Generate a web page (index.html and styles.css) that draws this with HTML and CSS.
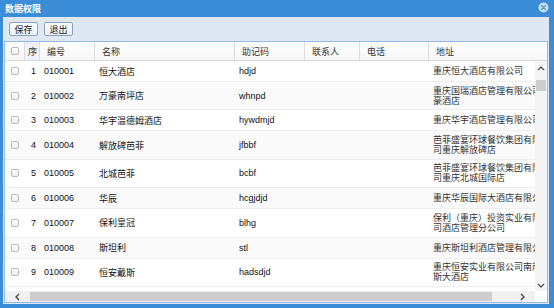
FILE: index.html
```html
<!DOCTYPE html>
<html lang="zh-CN">
<head>
    <meta charset="UTF-8">
    <title>数据权限</title>
    <link rel="stylesheet" href="styles.css">
</head>
<body>

    <div class="window">
        <div class="title">
            <span>数据权限</span>
            <svg class="close" width="11" height="11" viewBox="0 0 11 11">
                <circle cx="5.5" cy="5.5" r="5" fill="#cfe0f2"/>
                <path d="M3.5 3.5 L7.5 7.5 M7.5 3.5 L3.5 7.5" stroke="#5b9bd8" stroke-width="1.4" stroke-linecap="round"/>
            </svg>
        </div>

        <div class="panel">
            <div class="toolbar">
                <button class="btn">保存</button>
                <button class="btn">退出</button>
            </div>

            <div class="grid">
                <div class="grid-head">
                    <div class="row">
                        <div class="cell ck"><span class="box"></span></div>
                        <div class="cell num">序</div>
                        <div class="cell">编号</div>
                        <div class="cell">名称</div>
                        <div class="cell">助记码</div>
                        <div class="cell">联系人</div>
                        <div class="cell">电话</div>
                        <div class="cell">地址</div>
                    </div>
                </div>

                <div class="grid-mid">
                    <div class="grid-body">
                        <div class="row">
                            <div class="cell ck"><span class="box"></span></div>
                            <div class="cell num">1</div>
                            <div class="cell">010001</div>
                            <div class="cell">恒大酒店</div>
                            <div class="cell">hdjd</div>
                            <div class="cell"></div>
                            <div class="cell"></div>
                            <div class="cell addr">重庆恒大酒店有限公司</div>
                        </div>
                        <div class="row">
                            <div class="cell ck"><span class="box"></span></div>
                            <div class="cell num">2</div>
                            <div class="cell">010002</div>
                            <div class="cell">万豪南坪店</div>
                            <div class="cell">whnpd</div>
                            <div class="cell"></div>
                            <div class="cell"></div>
                            <div class="cell addr">重庆国瑞酒店管理有限公司万豪酒店</div>
                        </div>
                        <div class="row">
                            <div class="cell ck"><span class="box"></span></div>
                            <div class="cell num">3</div>
                            <div class="cell">010003</div>
                            <div class="cell">华宇温德姆酒店</div>
                            <div class="cell">hywdmjd</div>
                            <div class="cell"></div>
                            <div class="cell"></div>
                            <div class="cell addr">重庆华宇酒店管理有限公司</div>
                        </div>
                        <div class="row">
                            <div class="cell ck"><span class="box"></span></div>
                            <div class="cell num">4</div>
                            <div class="cell">010004</div>
                            <div class="cell">解放碑芭菲</div>
                            <div class="cell">jfbbf</div>
                            <div class="cell"></div>
                            <div class="cell"></div>
                            <div class="cell addr">芭菲盛宴环球餐饮集团有限公司重庆解放碑店</div>
                        </div>
                        <div class="row">
                            <div class="cell ck"><span class="box"></span></div>
                            <div class="cell num">5</div>
                            <div class="cell">010005</div>
                            <div class="cell">北城芭菲</div>
                            <div class="cell">bcbf</div>
                            <div class="cell"></div>
                            <div class="cell"></div>
                            <div class="cell addr">芭菲盛宴环球餐饮集团有限公司重庆北城国际店</div>
                        </div>
                        <div class="row">
                            <div class="cell ck"><span class="box"></span></div>
                            <div class="cell num">6</div>
                            <div class="cell">010006</div>
                            <div class="cell">华辰</div>
                            <div class="cell">hcgjdjd</div>
                            <div class="cell"></div>
                            <div class="cell"></div>
                            <div class="cell addr">重庆华辰国际大酒店有限公司</div>
                        </div>
                        <div class="row">
                            <div class="cell ck"><span class="box"></span></div>
                            <div class="cell num">7</div>
                            <div class="cell">010007</div>
                            <div class="cell">保利皇冠</div>
                            <div class="cell">blhg</div>
                            <div class="cell"></div>
                            <div class="cell"></div>
                            <div class="cell addr">保利（重庆）投资实业有限公司酒店管理分公司</div>
                        </div>
                        <div class="row">
                            <div class="cell ck"><span class="box"></span></div>
                            <div class="cell num">8</div>
                            <div class="cell">010008</div>
                            <div class="cell">斯坦利</div>
                            <div class="cell">stl</div>
                            <div class="cell"></div>
                            <div class="cell"></div>
                            <div class="cell addr">重庆斯坦利酒店管理有限公司</div>
                        </div>
                        <div class="row">
                            <div class="cell ck"><span class="box"></span></div>
                            <div class="cell num">9</div>
                            <div class="cell">010009</div>
                            <div class="cell">恒安戴斯</div>
                            <div class="cell">hadsdjd</div>
                            <div class="cell"></div>
                            <div class="cell"></div>
                            <div class="cell addr">重庆恒安实业有限公司南岸戴斯大酒店</div>
                        </div>
                    </div>

                    <div class="vbar">
                        <span class="vbtn up">
                            <svg width="8" height="5" viewBox="0 0 8 5"><path d="M1 4 L4 1 L7 4" fill="none" stroke="#555" stroke-width="1.3"/></svg>
                        </span>
                        <span class="vthumb"></span>
                        <span class="vtrack"></span>
                        <span class="vbtn down">
                            <svg width="8" height="5" viewBox="0 0 8 5"><path d="M1 1 L4 4 L7 1" fill="none" stroke="#555" stroke-width="1.3"/></svg>
                        </span>
                    </div>
                </div>

                <div class="grid-foot">
                    <div class="hbar">
                        <span class="hbtn left">
                            <svg width="5" height="8" viewBox="0 0 5 8"><path d="M4 1 L1 4 L4 7" fill="none" stroke="#444" stroke-width="1.3"/></svg>
                        </span>
                        <span class="hthumb"></span>
                        <span class="htrack"></span>
                        <span class="hbtn right">
                            <svg width="5" height="8" viewBox="0 0 5 8"><path d="M1 1 L4 4 L1 7" fill="none" stroke="#444" stroke-width="1.3"/></svg>
                        </span>
                    </div>
                    <div class="corner"></div>
                </div>
            </div>
        </div>
    </div>

</body>
</html>
```

FILE: styles.css
```css
* {
    box-sizing: border-box;
}

body {
    margin: 0;
    font-family: 'Liberation Sans', 'Noto Sans CJK SC', sans-serif;
    font-size: 9px;
    color: #222;
}

.window {
    width: 554px;
    height: 308px;
    background-color: #3a8dd6;
    padding: 0 5px 4px 3px;
    display: flex;
    flex-direction: column;
}

.title {
    height: 17px;
    flex-shrink: 0;
    display: flex;
    align-items: center;
    justify-content: space-between;
    padding-left: 2px;
    color: #fff;
    font-weight: bold;
    font-size: 9px;
}

.close {
    margin-top: -2px;
}

.panel {
    flex: 1;
    min-height: 0;
    background-color: #dfe8f2;
    padding: 0 1px 1px 1px;
    display: flex;
    flex-direction: column;
}

.toolbar {
    height: 24px;
    flex-shrink: 0;
    display: flex;
    align-items: center;
    gap: 6px;
    padding-left: 5px;
    padding-bottom: 1px;
}

.btn {
    width: 29px;
    height: 14px;
    padding: 0;
    font-family: inherit;
    font-size: 9px;
    color: #222;
    background: linear-gradient(#fbfcfd, #eaf0f6);
    border: 1px solid #8aa2bd;
    border-radius: 2px;
    cursor: pointer;
}

.grid {
    flex: 1;
    min-height: 0;
    background-color: #fff;
    border: 1px solid #95b8e7;
    display: flex;
    flex-direction: column;
}

.row {
    display: grid;
    grid-template-columns: 20px 15px 55px 140px 70px 55px 69px 130px;
    align-items: center;
}

.grid-head {
    height: 19px;
    flex-shrink: 0;
    overflow: hidden;
    background: linear-gradient(#fefefe, #f6f6f6);
    border-bottom: 1px solid #dcdcdc;
}

.grid-head .row {
    height: 18px;
    align-items: stretch;
}

.grid-head .cell {
    display: flex;
    align-items: center;
    padding-left: 7px;
    border-right: 1px solid #dcdcdc;
    color: #333;
}

.grid-head .cell.ck {
    padding-left: 0;
    justify-content: center;
}

.grid-head .cell.num {
    padding: 0 2px 0 0;
    justify-content: flex-end;
    background-color: #edf2f8;
}

.grid-mid {
    flex: 1;
    min-height: 0;
    display: flex;
}

.grid-body {
    flex: 1;
    min-width: 0;
    overflow: hidden;
}

.grid-body .row {
    min-height: 21px;
    border-bottom: 1px solid #efefef;
}

.grid-body .row:nth-child(even) {
    background-color: #fafafa;
}

.grid-body .cell {
    padding-left: 4px;
    white-space: nowrap;
    color: #111;
}

.grid-body .cell.addr {
    white-space: normal;
    width: 126px;
    padding: 3.7px 4px;
    line-height: 10px;
    color: #333;
}

.cell.ck {
    display: flex;
    justify-content: center;
    padding-left: 0;
}

.grid-body .cell.num {
    text-align: right;
    padding: 0 4px 0 0;
}

.box {
    width: 8px;
    height: 8px;
    border: 1px solid #b9b9b9;
    border-radius: 2px;
    background: linear-gradient(#fff, #f0f0f0);
}

/* fake scrollbars */
.vbar {
    width: 12px;
    flex-shrink: 0;
    background-color: #f4f4f4;
    display: flex;
    flex-direction: column;
    align-items: center;
}

.vbtn {
    display: flex;
    align-items: center;
    justify-content: center;
    width: 12px;
}

.vbtn.up {
    height: 19px;
    padding-bottom: 4px;
}

.vbtn.down {
    height: 16px;
    padding-top: 4px;
}

.vthumb {
    width: 10px;
    height: 11px;
    background-color: #cdcdcd;
}

.vtrack {
    flex: 1;
}

.grid-foot {
    height: 11px;
    flex-shrink: 0;
    display: flex;
}

.hbar {
    flex: 1;
    display: flex;
    align-items: center;
    background-color: #f1f1f1;
}

.hbtn {
    width: 25px;
    height: 11px;
    display: flex;
    align-items: center;
    justify-content: center;
}

.hthumb {
    width: 462px;
    height: 9px;
    background-color: #cdcdcd;
}

.htrack {
    flex: 1;
}

.corner {
    width: 12px;
    background-color: #fff;
}
```
